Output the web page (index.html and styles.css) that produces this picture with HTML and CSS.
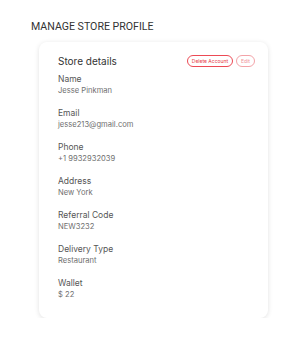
FILE: index.html
```html
<!DOCTYPE html>
<html lang="en">
  <head>
    <meta charset="UTF-8" />
    <meta name="viewport" content="width=device-width, initial-scale=1.0" />
    <title>Manage Store Profile</title>
    <link rel="stylesheet" href="styles.css">
  </head>
  <body>
    <div class="page">
      <h1 class="page-title">MANAGE STORE PROFILE</h1>
      <div class="card">
        <div class="card-head">
          <h2>Store details</h2>
          <div class="actions">
            <button class="btn btn-delete">Delete Account</button>
            <button class="btn btn-edit">Edit</button>
          </div>
        </div>
        <div class="field">
          <div class="label">Name</div>
          <div class="value">Jesse Pinkman</div>
        </div>
        <div class="field">
          <div class="label">Email</div>
          <div class="value">jesse213@gmail.com</div>
        </div>
        <div class="field">
          <div class="label">Phone</div>
          <div class="value">+1 9932932039</div>
        </div>
        <div class="field">
          <div class="label">Address</div>
          <div class="value">New York</div>
        </div>
        <div class="field">
          <div class="label">Referral Code</div>
          <div class="value">NEW3232</div>
        </div>
        <div class="field">
          <div class="label">Delivery Type</div>
          <div class="value">Restaurant</div>
        </div>
        <div class="field">
          <div class="label">Wallet</div>
          <div class="value">$ 22</div>
        </div>
      </div>
    </div>
  </body>
</html>
```

FILE: styles.css
```css
body {
  margin: 0;
  padding: 0;
  background: #ffffff;
  font-family: "Inter", "Noto Sans", sans-serif;
}
.page {
  padding: 20px 0 0 31px;
}
.page-title {
  margin: 0;
  font-family: "Roboto", sans-serif;
  font-weight: 400;
  font-size: 10.6px;
  line-height: 14px;
  color: #333333;
}
.card {
  margin: 8px 0 0 8px;
  width: 229px;
  box-sizing: border-box;
  padding: 13px 13px 18px 19px;
  background: #ffffff;
  border-radius: 8px;
  box-shadow: 0 1px 5px rgba(0, 0, 0, 0.12);
}
.card-head {
  display: flex;
  justify-content: space-between;
  align-items: center;
  margin-bottom: 6px;
}
.card-head h2 {
  margin: 0;
  font-size: 10px;
  font-weight: 400;
  color: #333333;
}
.actions {
  display: flex;
  gap: 3px;
}
.btn {
  font-family: inherit;
  font-size: 5px;
  height: 12px;
  padding: 0 4px;
  background: #ffffff;
  border-radius: 6px;
  line-height: 10px;
  cursor: pointer;
}
.btn-delete {
  border: 1px solid #ec4a55;
  color: #e63b46;
}
.btn-edit {
  border: 1px solid #f3a3a8;
  color: #ef9098;
}
.field {
  margin-bottom: 11px;
}
.field:last-child {
  margin-bottom: 0;
}
.label {
  font-size: 8.5px;
  line-height: 12px;
  color: #555555;
}
.value {
  font-size: 7.6px;
  line-height: 11px;
  color: #6f6f6f;
}
```
